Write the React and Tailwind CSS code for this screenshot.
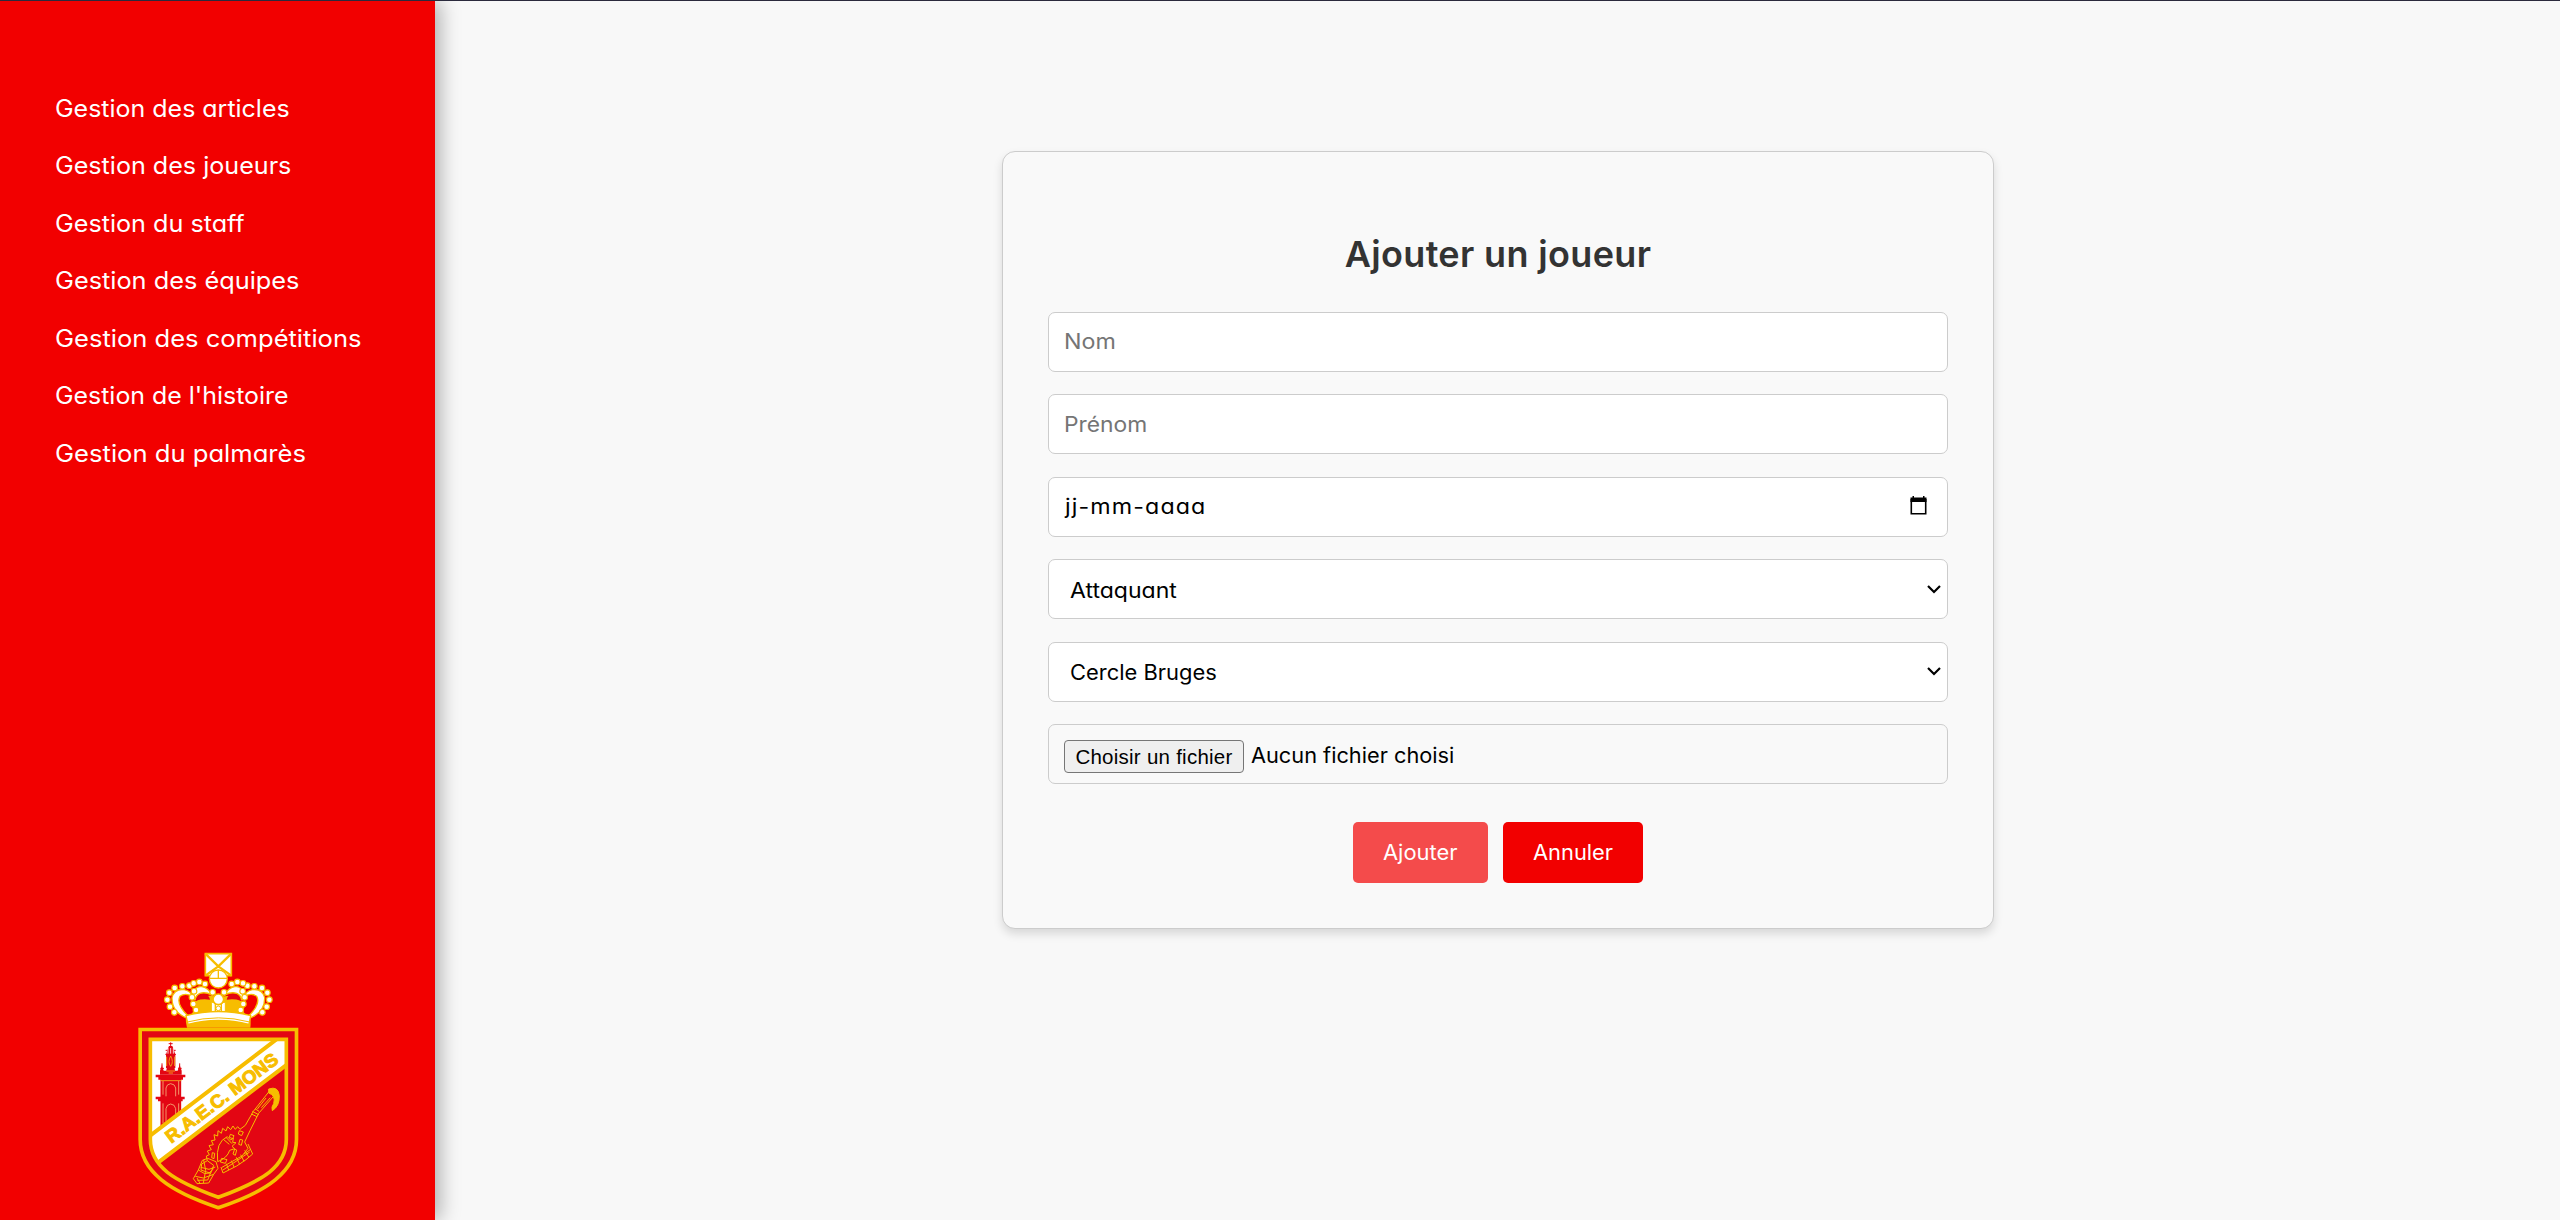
const menu = [
  ["Gestion des articles", "scale-x-[1.04]"],
  ["Gestion des joueurs", "scale-x-[1.046]"],
  ["Gestion du staff", "scale-x-[1.048]"],
  ["Gestion des équipes", "scale-x-[1.055]"],
  ["Gestion des compétitions", "scale-x-[1.064]"],
  ["Gestion de l'histoire", "scale-x-[1.037]"],
  ["Gestion du palmarès", "scale-x-[1.066]"],
];

const crownBeads = [
  [44, 129], [28, 143], [22, 164], [30, 185], [43, 202], [67, 124], [88, 122], [101, 115], [118, 111], [135, 117],
  [96, 157], [100, 177], [108, 195], [102, 139], [158, 142],
];

function Crest() {
  return (
    <svg viewBox="0 0 600 840" className="h-[280px] w-[200px]">
      <path d="M60.500 268.500H529.500V598C529.500 695 440 755 295 803C150 755 60.500 695 60.500 598Z" fill="#e30613" stroke="#f7bd00" strokeWidth="11" />
      <clipPath id="shield">
        <path d="M91 298H499V598C499 680 430 722 295 772C160 722 91 680 91 598Z" />
      </clipPath>
      <g clipPath="url(#shield)">
        <path d="M80 290H510V366L110 671L80 700Z" fill="#fff" />
        <g fill="#e30613" stroke="#e30613">
          <path d="M122 412H183V600H122Z" />
          <path d="M107 404H196V412H107ZM115 412H189V419H115ZM107 470H194V478H107ZM114 478H188V484H114Z" stroke="none" />
          <path d="M120 404V392L126 374L131 392H139L141 378H163L165 392H173L179 374L185 392V404Z" stroke="none" />
          <path d="M138 384V345L142 330L147 318H157L162 330L166 345V384Z" stroke="none" />
          <path d="M152 307V320M146 311H158M126 370V380M179 370V380M137 331H167M136 343H168M121 385H132M174 385H185" fill="none" strokeWidth="3" />
        </g>
        <path d="M138 469V444Q140 432 152 431Q165 432 167 444V469M138 545V506Q140 493 152 492Q165 493 167 506V545M129 423V464M176 423V464M129 490V550M176 490V545" fill="none" stroke="#f6b27a" strokeWidth="2.500" />
        <path d="M144 324V341M152 324V341M160 324V341" stroke="#fff" strokeWidth="2.500" />
        <path d="M152 348Q142 366 152 379Q162 366 152 348ZM140 350V378M164 350V378M139 393H165M146 399H159M122 422H184" fill="none" stroke="#f39a1c" strokeWidth="3" />
        <path d="M80 595L480 290H510V366L110 671L80 700Z" fill="#fff" />
        <path d="M80 595L480 290M110 671L520 359" fill="none" stroke="#f7bd00" strokeWidth="12" />
      </g>
      <path d="M91 298H499V598C499 680 430 722 295 772C160 722 91 680 91 598Z" fill="none" stroke="#f7bd00" strokeWidth="11" />
      <text transform="translate(154 611) rotate(-37)" textLength="407" lengthAdjust="spacingAndGlyphs" fontFamily="Liberation Sans, sans-serif" fontWeight="700" fontSize="55" fill="#f7bd00" stroke="#f7bd00" strokeWidth="3">R.A.E.C. MONS</text>
      <g fill="none" stroke="#f7bd00" strokeWidth="3" strokeLinejoin="round">
        <path d="M446 447Q475 437 478 467Q479 498 457 512Q453 501 461 491Q468 466 446 459Z" fill="#f7bd00" />
        <path d="M446 456L400 514L376 556L360 568M465 464L416 520L390 572L374 606M397 514L416 524M394 522L411 530M405 506L417 514M438 474L412 507M451 473L424 503" />
        <path d="M360 568L353 560L346 568L339 558L332 569L323 560L318 573L308 565L304 580L294 572L293 588L282 584L285 600L274 602L280 614L267 617L274 629L262 633L268 644L259 648L262 662" />
        <path d="M293 665Q286 606 322 590L332 600L340 594L338 607L348 608L336 619L344 626L329 631Q322 654 293 665ZM310 598L328 613M318 592L336 611" />
        <path d="M331 583L342 587L338 596L328 592ZM358 572L370 576L365 587L355 582ZM360 598L368 600L364 616L356 613ZM344 627L350 630L346 646L339 642ZM305 655L321 659L316 670L301 666ZM277 638L284 640L282 656L275 653Z" />
        <path d="M374 606L384 625L366 648L337 664L306 682M384 612L398 642L378 659L350 678L309 699L303 681M392 628L372 642M374 631L386 651M362 644L372 664M349 652L359 673M334 662L342 681M319 671L326 690M389 636L354 660L309 690" />
        <path d="M247 661L263 655L288 665L294 685L281 703L266 729L231 731L220 716L235 690ZM245 672L262 662L281 676L272 700L243 690ZM235 690L254 701L272 698L263 720L232 721M226 709L250 714L281 703M242 682L267 688L286 681M251 660L257 691L250 729M231 714L240 730M266 700L281 686" />
      </g>
      <g transform="translate(120 15)">
        <path d="M79 238Q72 205 97 178Q135 140 175 158Q218 142 254 178Q276 210 271 248H81Z" fill="#f7bd00" />
        <path d="M108 165Q118 143 135 148Q147 151 150 164Q128 160 108 167ZM242 165Q232 143 215 148Q203 151 200 164Q222 160 242 167Z" fill="#e30613" />
        <path d="M85 212Q50 176 64 158Q78 146 92 156Q90 178 101 198L94 208ZM265 212Q300 176 286 158Q272 146 258 156Q260 178 249 198L256 208Z" fill="#f20000" />
        <g id="crown-half">
          <path d="M82 220Q35 202 36 158Q43 130 73 134Q92 138 96 153Q74 143 60 154Q47 177 85 214Z" fill="#fff" stroke="#f7bd00" strokeWidth="4" />
          <path d="M100 152Q99 126 123 124Q147 128 155 150Q137 140 120 145Q107 150 105 166Z" fill="#fff" stroke="#f7bd00" strokeWidth="4" />
          {crownBeads.map(([x, y]) => <circle key={x + "-" + y} cx={x} cy={y} r="8.500" fill="#fff" stroke="#f7bd00" strokeWidth="3.500" />)}
        </g>
        <use href="#crown-half" transform="translate(350 0) scale(-1 1)" />
        <path d="M154 172H196V201H154Z" fill="#fff" stroke="#f7bd00" strokeWidth="3" />
        <path d="M166 172V200M184 172V200" stroke="#f7bd00" strokeWidth="4" />
        <circle cx="175" cy="163" r="16" fill="#fff" stroke="#f7bd00" strokeWidth="5" />
        <circle cx="175" cy="190" r="7" fill="#fff" stroke="#f7bd00" strokeWidth="3" />
        <path d="M78 212Q175 187 272 212L267 238Q175 214 84 238Z" fill="#fff" stroke="#f7bd00" strokeWidth="4" />
        <path d="M82 231Q175 206 269 231" fill="none" stroke="#f7bd00" strokeWidth="3" />
        <path d="M136 26H214V92H136Z" fill="#fff" stroke="#f7bd00" strokeWidth="5" />
        <path d="M136 26L175 64L214 26M136 92L175 64L214 92" fill="none" stroke="#f7bd00" strokeWidth="7" />
        <circle cx="175" cy="102" r="27" fill="#fff" stroke="#f7bd00" strokeWidth="4" />
        <path d="M148 100H202M175 76V100" stroke="#f7bd00" strokeWidth="4" />
      </g>
    </svg>
  );
}

function Field({ children, className = "pl-[15px]" }) {
  return <div className={"flex h-[60px] items-center rounded-[7px] border border-[#ccc] pr-[15px] " + className}>{children}</div>;
}

function Chevron() {
  return (
    <svg viewBox="0 0 14 9" className="mr-[-9px] ml-auto h-[9px] w-[14px]" fill="none" stroke="#000" strokeWidth="2.200">
      <path d="M1 1L7 7L13 1" />
    </svg>
  );
}

export default function App() {
  return (
    <div className="flex h-[1220px] flex-col bg-[#f8f8f8] font-[Inter,sans-serif] [font-feature-settings:'cv11']">
      <div className="relative z-20 h-px shrink-0 bg-[#2b2a3d]" />
      <div className="flex min-h-0 flex-1">
        <aside className="flex w-[435px] shrink-0 flex-col justify-between bg-[#f20000] pt-[79px] shadow-[5px_0_19px_rgba(0,0,0,0.3)]">
          <nav className="flex flex-col pl-[54.5px] text-[24px] text-white">
            {menu.map(([label, stretch]) => (
              <a key={label} className="flex h-[57.5px] items-center whitespace-nowrap"><span className={"origin-left " + stretch}>{label}</span></a>
            ))}
          </nav>
          <div className="ml-[120px] flex"><Crest /></div>
        </aside>
        <main className="flex flex-1 justify-center pt-[150px] pl-px">
          <form className="flex h-[778px] w-[992px] flex-col rounded-[13px] border border-[#ccc] bg-[#f9f9f9] px-[45px] pt-[76px] shadow-[0_5px_10px_rgba(0,0,0,0.13)]">
            <h2 className="mb-[32px] h-[52px] text-center text-[36px] leading-[52px] font-semibold text-[#333]"><span className="tracking-[0.35px]">Ajouter un joueur</span></h2>
            <div className="flex flex-col gap-[22.4px] text-[20.75px] leading-[30px] text-black">
              <Field className="bg-white pl-[15px] text-[#757575]"><span className="origin-left scale-x-[1.12]">Nom</span></Field>
              <Field className="bg-white pl-[15px] text-[#757575]"><span className="origin-left scale-x-[1.1] pt-px">Prénom</span></Field>
              <Field className="bg-white pl-[16px]">
                <span className="origin-left scale-x-[1.12] pt-px tracking-[1px]">jj-mm-aaaa</span>
                <svg viewBox="0 0 17 19" className="mr-[5px] mb-[2px] ml-auto h-[19px] w-[17px]">
                  <path d="M1.300 3V17.700H15.700V3" fill="none" stroke="#000" strokeWidth="1.600" />
                  <path d="M.500 1.500H2.500V0H4V1.500H13V0H14.500V1.500H16.500V6H.500Z" />
                </svg>
              </Field>
              <Field className="bg-white pl-[21px]"><span className="origin-left scale-x-[1.11] pt-[3px]">Attaquant</span><Chevron /></Field>
              <Field className="bg-white pl-[21px]"><span className="origin-left scale-x-[1.056] pt-[3px]">Cercle Bruges</span><Chevron /></Field>
              <Field>
                <span className="mt-[5px] flex h-[33px] w-[180px] items-center justify-center rounded-[4px] border border-[#767676] bg-[#efefef] font-['Liberation_Sans',Arial,sans-serif] text-[20.5px]"><span className="pt-px tracking-[0.25px]">Choisir un fichier</span></span>
                <span className="ml-[7px] origin-left scale-x-[1.048] pt-[5px]">Aucun fichier choisi</span>
              </Field>
            </div>
            <div className="mt-[38px] flex justify-center gap-[15px] text-[20.75px] text-white">
              <button type="button" className="h-[61px] w-[135px] rounded-[5px] bg-[#f44b4b]"><span className="inline-block scale-x-[1.057]">Ajouter</span></button>
              <button type="button" className="h-[61px] w-[140px] rounded-[5px] bg-[#f20000]"><span className="inline-block scale-x-[1.053]">Annuler</span></button>
            </div>
          </form>
        </main>
      </div>
    </div>
  );
}
